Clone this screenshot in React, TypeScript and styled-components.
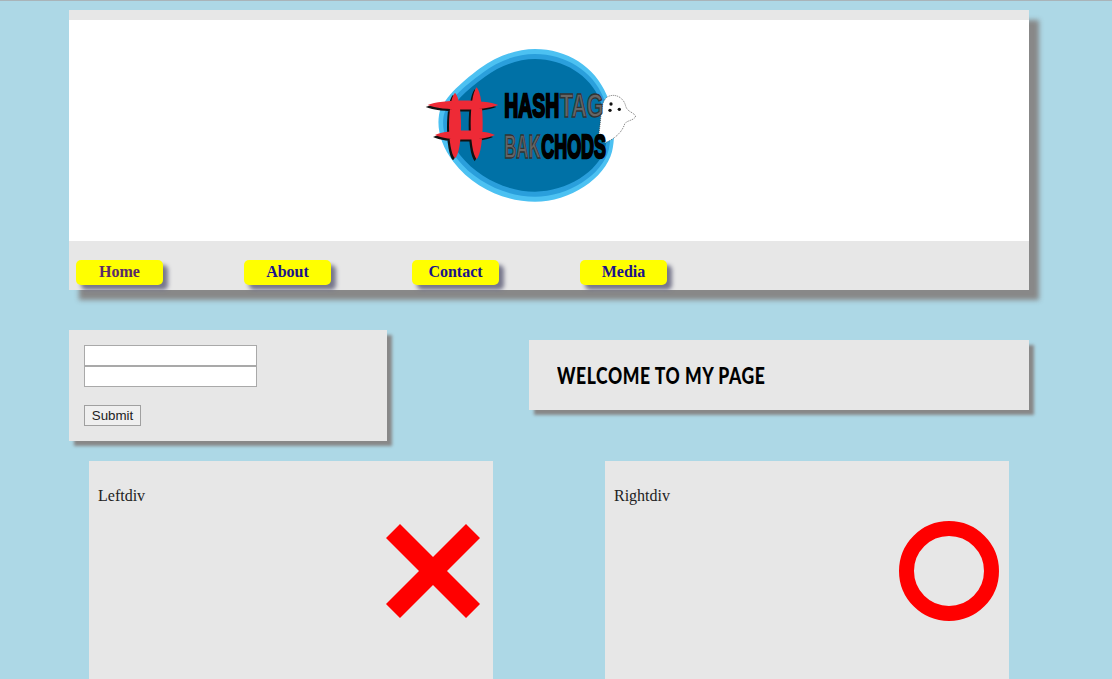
import React from "react";
import styled, { createGlobalStyle } from "styled-components";

const Global = createGlobalStyle`
  html, body { margin: 0; padding: 0; height: 679px; overflow: hidden; background: #add8e6; }
  #root { height: 679px; overflow: hidden; }
`;

const Page = styled.div`
  box-sizing: border-box;
  height: 679px;
  overflow: hidden;
  border-top: 1px solid #a9b4b9;
  padding: 9px 0 0 69px;
  width: 1112px;
  font-family: "Liberation Serif", serif;
`;

const Column = styled.div`
  width: 960px;
`;

const Header = styled.header`
  background: #e7e7e7;
  padding-top: 10px;
  box-shadow: 10px 10px 5px #888888;
`;

const Banner = styled.div`
  background: #fff;
  height: 221px;
  display: flex;
  justify-content: center;
`;

const Logo = styled.svg`
  width: 240px;
  height: 170px;
  margin: 20px 38px 0 0;
`;

const LogoWord = styled.text<{ $dark?: boolean }>`
  font: 700 100px "Liberation Sans", sans-serif;
  fill: ${(p) => (p.$dark ? "#000" : "#666")};
  stroke: ${(p) => (p.$dark ? "#000" : "#333")};
  stroke-width: ${(p) => (p.$dark ? 7 : 4)}px;
`;

const Nav = styled.nav`
  height: 49px;
  box-sizing: border-box;
  padding: 19px 0 0 7px;
  display: flex;
  gap: 81px;
`;

const NavButton = styled.a`
  width: 87px;
  height: 25px;
  background: #ffff00;
  border-radius: 5px;
  box-shadow: 5px 5px 4px #77778c;
  color: #1a128c;
  font: bold 16px/24px "Liberation Serif", serif;
  text-align: center;
  &:first-child { color: #5a2a6a; }
`;

const MiddleRow = styled.div`
  display: flex;
  justify-content: space-between;
  align-items: flex-start;
  margin-top: 40px;
`;

const LoginPanel = styled.form`
  box-sizing: border-box;
  width: 318px;
  height: 111px;
  padding: 15px;
  background: #e7e7e7;
  box-shadow: 5px 5px 3px #888888;
  display: flex;
  flex-direction: column;
  align-items: flex-start;
`;

const TextField = styled.input`
  box-sizing: border-box;
  width: 173px;
  height: 21px;
  margin: 0;
  padding: 1px 2px;
  background: #fff;
  border: 1px solid #a9a9a9;
`;

const SubmitButton = styled.button`
  box-sizing: border-box;
  width: 57px;
  height: 21px;
  margin-top: 18px;
  padding: 0;
  background: #efefef;
  border: 1px solid #a0a0a0;
  color: #222;
  font: 13.33px "Liberation Sans", sans-serif;
`;

const WelcomePanel = styled.div`
  box-sizing: border-box;
  width: 500px;
  height: 70px;
  margin-top: 10px;
  padding: 0 0 2px 28px;
  background: #e7e7e7;
  box-shadow: 5px 5px 3px #888888;
  display: flex;
  align-items: center;
`;

const WelcomeTitle = styled.h2`
  margin: 0;
  color: #000;
  font: 900 21px "Lato", sans-serif;
  letter-spacing: 0.65px;
  white-space: nowrap;
  transform-origin: left center;
  transform: scale(0.836, 1.12);
`;

const Boards = styled.div`
  display: flex;
  justify-content: space-between;
  padding: 0 20px;
  margin-top: 20px;
`;

const Board = styled.section`
  box-sizing: border-box;
  width: 404px;
  height: 260px;
  background: #e7e7e7;
  padding: 26px 10px 0 9px;
  display: flex;
  flex-direction: column;
  color: #222;
  font-size: 16px;
  line-height: 18px;
`;

const Mark = styled.svg<{ $size: number; $top: number; $right: number }>`
  width: ${(p) => p.$size}px;
  height: ${(p) => p.$size}px;
  align-self: flex-end;
  margin-top: ${(p) => p.$top}px;
  margin-right: ${(p) => p.$right}px;
`;

const hBar = (x1: number, x2: number, y: number, h: number) => {
  const l = x2 - x1;
  return `M${x1} ${y}C${x1 + l * 0.2} ${y - h} ${x2 - l * 0.2} ${y - h} ${x2} ${y}C${x2 - l * 0.2} ${y + h} ${x1 + l * 0.2} ${y + h} ${x1} ${y}Z`;
};

const vBar = (x: number, y1: number, y2: number, w: number) => {
  const l = y2 - y1;
  return `M${x} ${y1}C${x + w} ${y1 + l * 0.12} ${x + w} ${y2 - l * 0.12} ${x} ${y2}C${x - w} ${y2 - l * 0.12} ${x - w} ${y1 + l * 0.12} ${x} ${y1}Z`;
};

const hashBars = [
  vBar(135, 158, 355, 24),
  vBar(200, 142, 358, 24),
  hBar(53, 265, 195, 18),
  hBar(75, 255, 285, 18),
].join(" ");

const LogoMark = () => (
  <Logo viewBox="0 0 720 510" role="img" aria-label="Hashtag Bakchods logo">
    <path
      d="M375 27C470 27 555 80 590 165C612 225 618 285 606 335C585 415 480 485 375 485C290 485 190 445 130 365C95 320 80 270 87 225C95 180 150 130 210 85C260 48 320 27 375 27Z"
      fill="#4cc1f2"
    />
    <path
      d="M375 42C465 42 548 92 580 172C602 230 606 285 596 330C576 405 475 470 375 470C292 470 198 430 140 355C108 312 94 268 101 228C110 185 160 140 218 98C265 62 322 42 375 42Z"
      fill="#2a9fdc"
    />
    <path
      d="M375 57C460 57 540 105 570 180C590 235 595 285 585 325C565 395 470 455 375 455C295 455 205 415 150 345C120 305 108 265 115 230C125 190 170 150 225 110C270 77 325 57 375 57Z"
      fill="#0071a6"
    />
    <path d={hashBars} fill="#111" transform="translate(-6 6)" />
    <path d={hashBars} fill="#ee2a36" />
    <path
      d="M566 285C575 235 570 190 590 172C612 158 640 170 647 198C652 216 668 215 677 228C672 243 650 240 644 252C635 280 610 298 586 308C578 300 570 295 566 285Z"
      fill="#fff"
      stroke="#333"
      strokeWidth="2"
      strokeDasharray="3 3"
    />
    <circle cx="603" cy="192" r="5" fill="#111" />
    <circle cx="600" cy="211" r="5" fill="#111" />
    <circle cx="628" cy="208" r="5" fill="#111" />
    <LogoWord $dark transform="translate(283 232) scale(0.58 1)">HASH</LogoWord>
    <LogoWord transform="translate(450 232) scale(0.64 1)">TAG</LogoWord>
    <LogoWord transform="translate(283 354) scale(0.5 1)">BAK</LogoWord>
    <LogoWord $dark transform="translate(394 354) scale(0.537 1)">CHODS</LogoWord>
  </Logo>
);

export default function App() {
  return (
    <Page>
      <Global />
      <Column>
        <Header>
          <Banner>
            <LogoMark />
          </Banner>
          <Nav>
            <NavButton>Home</NavButton>
            <NavButton>About</NavButton>
            <NavButton>Contact</NavButton>
            <NavButton>Media</NavButton>
          </Nav>
        </Header>
        <MiddleRow>
          <LoginPanel onSubmit={(e) => e.preventDefault()}>
            <TextField type="text" />
            <TextField type="password" />
            <SubmitButton type="submit">Submit</SubmitButton>
          </LoginPanel>
          <WelcomePanel>
            <WelcomeTitle>WELCOME TO MY PAGE</WelcomeTitle>
          </WelcomePanel>
        </MiddleRow>
        <Boards>
          <Board>
            Leftdiv
            <Mark viewBox="0 0 94 94" $size={94} $top={19} $right={3}>
              <path d="M14 0L47 33L80 0L94 14L61 47L94 80L80 94L47 61L14 94L0 80L33 47L0 14Z" fill="#ff0000" />
            </Mark>
          </Board>
          <Board>
            Rightdiv
            <Mark viewBox="0 0 100 100" $size={100} $top={16} $right={0}>
              <circle cx="50" cy="50" r="42.5" fill="none" stroke="#ff0000" strokeWidth="15" />
            </Mark>
          </Board>
        </Boards>
      </Column>
    </Page>
  );
}
